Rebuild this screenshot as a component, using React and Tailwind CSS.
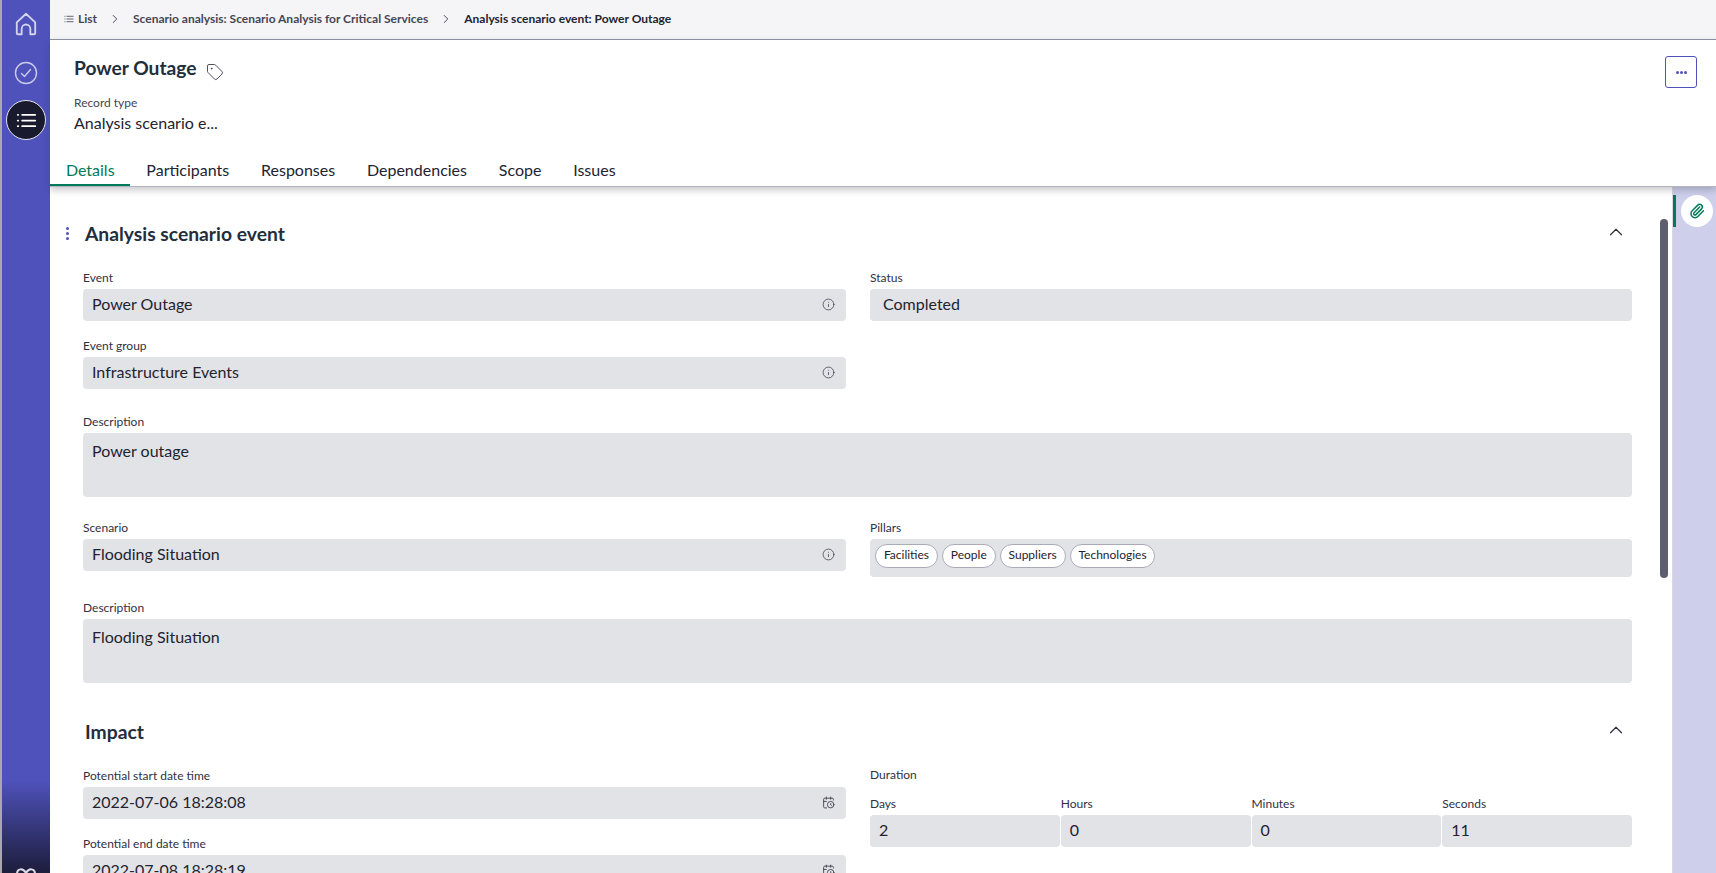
import React from 'react';
import { ChevronRight, ChevronUp, Info, CalendarClock, Paperclip, Tag } from 'lucide-react';

const tabs = ['Details', 'Participants', 'Responses', 'Dependencies', 'Scope', 'Issues'];
const pillars = ['Facilities', 'People', 'Suppliers', 'Technologies'];
const durations = [['Days', '2'], ['Hours', '0'], ['Minutes', '0'], ['Seconds', '11']];

const ListGlyph = ({ className }) => (
    <svg viewBox="0 0 24 24" className={className} fill="none" stroke="currentColor" strokeWidth="2" strokeLinecap="round">
        <path d="M7 5.500h15M7 12h15M7 18.500h15M2 5.500h.5M2 12h.5M2 18.500h.5" />
    </svg>
);

const Label = ({ children }) => (
    <div className="h-[22px] text-[12px] leading-[22px] text-[#30303f]">{children}</div>
);

const Field = ({ label, value, icon, className = 'mb-[14px]' }) => (
    <div className={className}>
        <Label>{label}</Label>
        <div className="flex h-[32px] items-center justify-between rounded-[4px] bg-[#e2e3e7] pb-[2px] pl-[9px] pr-[11px] text-[16px] text-[#23232f]">
            <span>{value}</span>
            {icon}
        </div>
    </div>
);

const InfoIcon = () => <Info size={13} strokeWidth={1.4} className="text-[#3c3c4a]" />;
const DateIcon = () => <CalendarClock size={13} strokeWidth={1.6} className="text-[#3c3c4a]" />;

const SectionHeader = ({ title, dots, className }) => (
    <div className={`flex items-center justify-between ${className}`}>
        <div className="relative pl-[2px] text-[19.3px] font-bold leading-[28px] text-[#222e3c]">
            {dots && (
                <div className="absolute left-[-17px] top-[7px] flex flex-col gap-[2px]">
                    <span className="h-[3px] w-[3px] rounded-full bg-[#4f52bb]" />
                    <span className="h-[3px] w-[3px] rounded-full bg-[#4f52bb]" />
                    <span className="h-[3px] w-[3px] rounded-full bg-[#4f52bb]" />
                </div>
            )}
            {title}
        </div>
        <ChevronUp size={22} strokeWidth={1.3} className="mr-[5px] -mt-[5px] text-[#30303f]" />
    </div>
);

export default function App() {
    return (
        <div className="flex h-[873px] w-[1716px] overflow-hidden bg-white font-['Lato','Liberation_Sans',sans-serif]">
            <div className="flex w-[50px] shrink-0 flex-col items-center border-l-2 border-[#a8a8ae] bg-[linear-gradient(to_bottom,#4f52bb_0,#4f52bb_780px,#1d1d3c_873px)] pt-[11px]">
                <svg viewBox="0 0 24 24" className="h-[26px] w-[26px] text-[#d3d4ec]" fill="none" stroke="currentColor" strokeWidth="1.7" strokeLinejoin="round" strokeLinecap="round">
                    <path d="M3.500 10.500 12 2.500l8.500 8v10a1 1 0 0 1-1 1H16v-5a4 4 0 0 0-8 0v5H4.500a1 1 0 0 1-1-1z" />
                </svg>
                <svg viewBox="0 0 24 24" className="mt-[24px] h-[24px] w-[24px] text-[#c9cbe8]" fill="none" stroke="currentColor" strokeWidth="1.4" strokeLinecap="round" strokeLinejoin="round">
                    <circle cx="12" cy="12" r="10.500" />
                    <path d="m7.500 12.500 3 3 6-7" />
                </svg>
                <div className="mt-[15px] flex h-[40px] w-[40px] items-center justify-center rounded-full border border-[#e6e6f2] bg-[#1a1a2e] text-white">
                    <ListGlyph className="h-[21px] w-[21px]" />
                </div>
                <svg viewBox="0 0 24 16" className="mt-auto -mb-[9px] h-[16px] w-[26px] text-[#dcdce8]" fill="none" stroke="currentColor" strokeWidth="2">
                    <path d="M12 7C9 2 3 2 3 8s6 7 9 2c3 5 9 4 9-2s-6-6-9-1z" />
                </svg>
            </div>

            <div className="flex min-w-0 flex-1 flex-col">
                <div className="flex h-[40px] shrink-0 items-center border-b border-[#8f93a3] bg-[#f5f5f8] pb-[2px] pl-[14px] text-[12px] font-bold text-[#454556]">
                    <ListGlyph className="mr-[4px] h-[10px] w-[10px] text-[#454556]" />
                    <span>List</span>
                    <ChevronRight size={14} strokeWidth={1.5} className="mx-[11px] text-[#30303f]" />
                    <span>Scenario analysis: Scenario Analysis for Critical Services</span>
                    <ChevronRight size={14} strokeWidth={1.5} className="mx-[11px] text-[#30303f]" />
                    <span className="text-[#23232f]">Analysis scenario event: Power Outage</span>
                </div>

                <div className="relative z-10 h-[147px] shrink-0 border-b border-[#b4b4c0] bg-white shadow-[0_3px_7px_rgba(40,40,60,0.25)]">
                    <div className="flex items-center pl-[24px] pt-[14px]">
                        <span className="text-[19.2px] font-bold leading-[28px] text-[#222e3c]">Power Outage</span>
                        <Tag size={18} strokeWidth={1.2} className="ml-[10px] mt-[7px] text-[#3c3c4a]" />
                    </div>
                    <div className="pl-[24px] pt-[13px] text-[12px] leading-[16px] text-[#44444f]">Record type</div>
                    <div className="pl-[24px] pt-[1px] text-[16px] leading-[22px] text-[#23232f]">Analysis scenario e...</div>
                    <button className="absolute right-[19px] top-[16px] flex h-[32px] w-[32px] items-center justify-center gap-[1px] rounded-[3px] border-[1.5px] border-[#4f52bb] bg-white">
                        <span className="h-[3px] w-[3px] rounded-full bg-[#4f52bb]" />
                        <span className="h-[3px] w-[3px] rounded-full bg-[#4f52bb]" />
                        <span className="h-[3px] w-[3px] rounded-full bg-[#4f52bb]" />
                    </button>
                    <div className="absolute bottom-0 left-0 flex h-[34px]">
                        {tabs.map((t, i) => (
                            <div key={t} className={`flex items-center border-b-[2px] px-[15.9px] pt-[4px] text-[16px] ${i === 0 ? 'border-[#007a5a] text-[#007a5a]' : 'border-transparent text-[#23232f]'}`}>{t}</div>
                        ))}
                    </div>
                </div>

                <div className="flex min-h-0 flex-1">
                    <div className="relative min-w-0 flex-1 overflow-hidden">
                        <div className="pl-[33px] pr-[40px] pt-[33px]">
                            <SectionHeader title="Analysis scenario event" dots className="h-[28px]" />
                            <div className="mt-[19px] grid grid-cols-[763px_762px] gap-x-[24px]">
                                <div>
                                    <Field label="Event" value="Power Outage" icon={<InfoIcon />} />
                                    <Field label="Event group" value="Infrastructure Events" icon={<InfoIcon />} className="" />
                                </div>
                                <div>
                                    <Label>Status</Label>
                                    <div className="flex h-[32px] items-center rounded-[4px] bg-[#e2e3e7] pb-[2px] pl-[13px] text-[16px] text-[#23232f]">Completed</div>
                                </div>
                            </div>
                            <div className="mt-[22px]">
                                <Label>Description</Label>
                                <div className="h-[64px] rounded-[4px] bg-[#e2e3e7] px-[9px] pt-[8px] text-[16px] leading-[20px] text-[#23232f]">Power outage</div>
                            </div>
                            <div className="mt-[20px] grid grid-cols-[763px_762px] gap-x-[24px]">
                                <Field label="Scenario" value="Flooding Situation" icon={<InfoIcon />} className="" />
                                <div>
                                    <Label>Pillars</Label>
                                    <div className="flex h-[38px] gap-[4px] rounded-[4px] bg-[#e2e3e7] pl-[5px] pt-[5px]">
                                        {pillars.map((p) => (
                                            <span key={p} className="flex h-[24px] items-center rounded-full border border-[#a9abb8] bg-white px-[7.9px] pb-[2px] text-[12px] text-[#23232f]">{p}</span>
                                        ))}
                                    </div>
                                </div>
                            </div>
                            <div className="mt-[20px]">
                                <Label>Description</Label>
                                <div className="h-[64px] rounded-[4px] bg-[#e2e3e7] px-[9px] pt-[8px] text-[16px] leading-[20px] text-[#23232f]">Flooding Situation</div>
                            </div>
                            <SectionHeader title="Impact" className="mt-[35px] h-[28px]" />
                            <div className="mt-[19px] grid grid-cols-[763px_762px] gap-x-[24px]">
                                <div>
                                    <Field label="Potential start date time" value="2022-07-06 18:28:08" icon={<DateIcon />} />
                                    <Field label="Potential end date time" value="2022-07-08 18:28:19" icon={<DateIcon />} className="" />
                                </div>
                                <div className="-mt-[1px]">
                                    <Label>Duration</Label>
                                    <div className="grid grid-cols-4 gap-x-[1px] pt-[7px]">
                                        {durations.map(([l, v]) => (
                                            <div key={l}>
                                                <Label>{l}</Label>
                                                <div className="flex h-[32px] items-center rounded-[4px] bg-[#e2e3e7] pb-[2px] pl-[9px] text-[16px] text-[#23232f]">{v}</div>
                                            </div>
                                        ))}
                                    </div>
                                </div>
                            </div>
                        </div>
                        <div className="absolute right-[4px] top-[32px] h-[359px] w-[8px] rounded-full bg-[#5f5e70]" />
                    </div>
                    <div className="relative w-[44px] shrink-0 border-l border-[#d8d8e0] bg-[#cdcfeb]">
                        <div className="absolute left-[0px] top-[8px] h-[32px] w-[3px] bg-[#007a5a]" />
                        <div className="absolute left-[8px] top-[8px] flex h-[32px] w-[32px] items-center justify-center rounded-full bg-white">
                            <Paperclip size={16} strokeWidth={2.2} className="text-[#007a5a]" />
                        </div>
                    </div>
                </div>
            </div>
        </div>
    );
}
